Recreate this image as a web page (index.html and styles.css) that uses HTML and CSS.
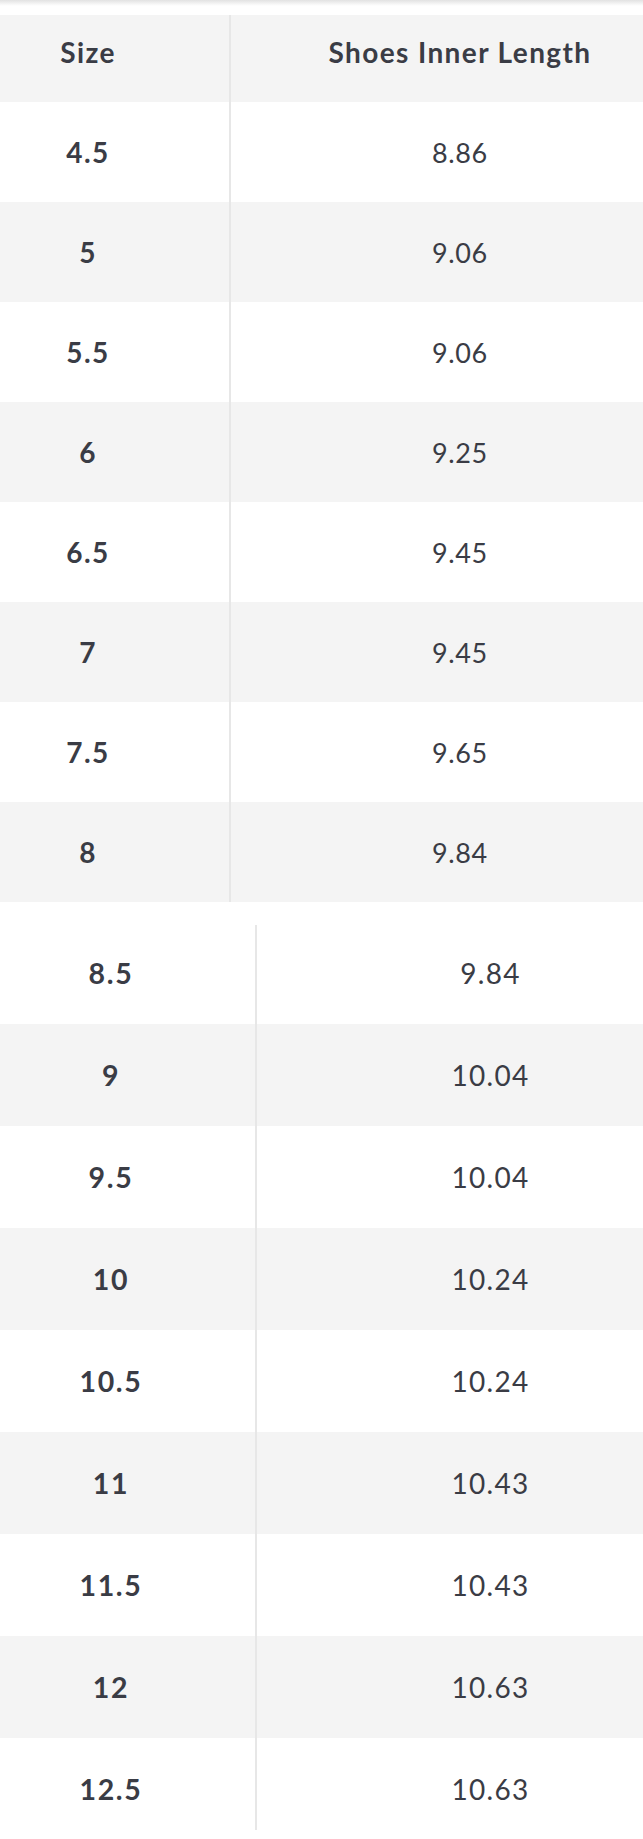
FILE: index.html
```html
<!DOCTYPE html>
<html>
<head>
<meta charset="utf-8">
<link rel="stylesheet" href="styles.css">
</head>
<body>
<div class="topbar"></div>
<div class="chart chart-a">
  <div class="row head grey"><div class="c1">Size</div><div class="sep"></div><div class="c2">Shoes Inner Length</div></div>
  <div class="row"><div class="c1">4.5</div><div class="sep"></div><div class="c2">8.86</div></div>
  <div class="row grey"><div class="c1">5</div><div class="sep"></div><div class="c2">9.06</div></div>
  <div class="row"><div class="c1">5.5</div><div class="sep"></div><div class="c2">9.06</div></div>
  <div class="row grey"><div class="c1">6</div><div class="sep"></div><div class="c2">9.25</div></div>
  <div class="row"><div class="c1">6.5</div><div class="sep"></div><div class="c2">9.45</div></div>
  <div class="row grey"><div class="c1">7</div><div class="sep"></div><div class="c2">9.45</div></div>
  <div class="row"><div class="c1">7.5</div><div class="sep"></div><div class="c2">9.65</div></div>
  <div class="row grey"><div class="c1">8</div><div class="sep"></div><div class="c2">9.84</div></div>
</div>
<div class="chart chart-b">
  <div class="row first"><div class="c1">8.5</div><div class="sep"></div><div class="c2">9.84</div></div>
  <div class="row grey"><div class="c1">9</div><div class="sep"></div><div class="c2">10.04</div></div>
  <div class="row"><div class="c1">9.5</div><div class="sep"></div><div class="c2">10.04</div></div>
  <div class="row grey"><div class="c1">10</div><div class="sep"></div><div class="c2">10.24</div></div>
  <div class="row"><div class="c1">10.5</div><div class="sep"></div><div class="c2">10.24</div></div>
  <div class="row grey"><div class="c1">11</div><div class="sep"></div><div class="c2">10.43</div></div>
  <div class="row"><div class="c1">11.5</div><div class="sep"></div><div class="c2">10.43</div></div>
  <div class="row grey"><div class="c1">12</div><div class="sep"></div><div class="c2">10.63</div></div>
  <div class="row last"><div class="c1">12.5</div><div class="sep"></div><div class="c2">10.63</div></div>
</div>
</body>
</html>
```
FILE: styles.css
```css
html, body {
  margin: 0;
  padding: 0;
  background: #ffffff;
}
body {
  width: 643px;
  font-family: Lato, "Noto Sans", sans-serif;
  color: #3a3c45;
  overflow: hidden;
}
.topbar {
  height: 15px;
  background: linear-gradient(to bottom, #e2e2e2 0px, #fbfbfb 5px, #ffffff 6px, #ffffff 15px);
}
.row {
  display: flex;
  align-items: stretch;
  background: #ffffff;
}
.row.grey {
  background: #f4f4f4;
}
.c1, .c2 {
  display: flex;
  align-items: center;
  justify-content: center;
  font-size: 27px;
  line-height: 1;
}
.c1 {
  font-weight: 700;
  font-size: 28px;
  letter-spacing: 1.4px;
}
.c2 {
  flex: 1;
  font-weight: 400;
  letter-spacing: 0.6px;
}
.sep {
  width: 2px;
  background: #e7e7e7;
}
.chart-a .row {
  height: 100px;
}
.chart-a .row.head {
  height: 87px;
}
.chart-a .head .c1, .chart-a .head .c2 {
  font-weight: 700;
  font-size: 28px;
  letter-spacing: 1.4px;
  padding-bottom: 13px;
}
.chart-a .c1 {
  width: 172px;
  padding-left: 2px;
  padding-right: 55px;
}
.chart-a .c2 {
  padding-left: 46px;
}
.chart-b {
  margin-top: 20px;
}
.chart-b .row {
  height: 102px;
}
.chart-b .c1 {
  width: 218px;
  padding-left: 2px;
  padding-right: 35px;
  font-size: 28.5px;
  letter-spacing: 1.7px;
}
.chart-b .c2 {
  padding-left: 81px;
  font-size: 28px;
  letter-spacing: 1.3px;
}
.chart-b .first .sep {
  margin-top: 3px;
}
.chart-b .last .sep {
  margin-bottom: 10px;
}
```
